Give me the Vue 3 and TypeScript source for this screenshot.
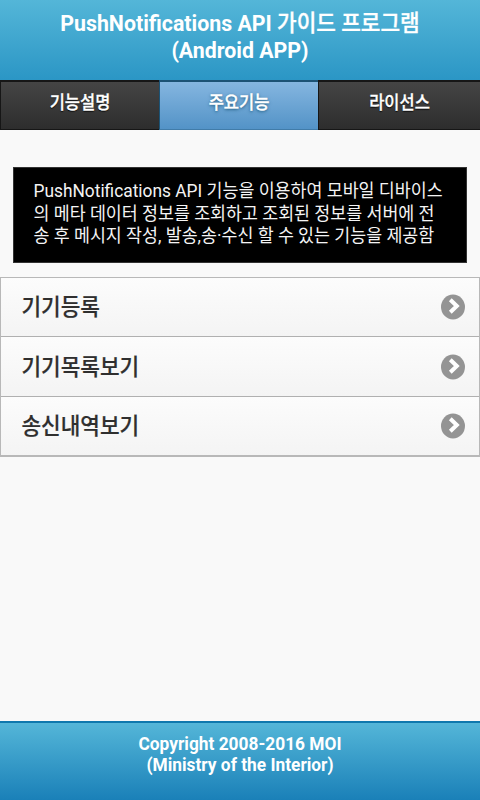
<script setup lang="ts">
interface Tab {
  label: string
  active: boolean
}

const tabs: Tab[] = [
  { label: '기능설명', active: false },
  { label: '주요기능', active: true },
  { label: '라이선스', active: false },
]

const items: string[] = ['기기등록', '기기목록보기', '송신내역보기']
</script>

<template>
  <div class="page">
    <header class="header">
      <h1 class="title">
        <span class="title-line">PushNotifications API <span class="ko">가이드 프로그램</span></span>
        <span class="title-line">(Android APP)</span>
      </h1>
    </header>
    <nav class="tabs">
      <a v-for="tab in tabs" :key="tab.label" class="tab" :class="{ active: tab.active }">
        <span class="tab-text">{{ tab.label }}</span>
      </a>
    </nav>
    <main class="content">
      <p class="notice">
        <span class="line">PushNotifications API 기능을 이용하여 모바일 디바이스</span>
        <span class="line">의 메타 데이터 정보를 조회하고 조회된 정보를 서버에 전</span>
        <span class="line">송 후 메시지 작성, 발송,송·수신 할 수 있는 기능을 제공함</span>
      </p>
      <ul class="list">
        <li v-for="item in items" :key="item" class="row">
          <span class="label">{{ item }}</span>
          <svg class="arrow" viewBox="0 0 24 26" width="24" height="26">
            <ellipse cx="12" cy="13" rx="12" ry="12.5" fill="#949494" />
            <path d="M9.3 5.8 L15.8 12 L9.3 18.2" fill="none" stroke="#fff" stroke-width="4" />
          </svg>
        </li>
      </ul>
    </main>
    <footer class="footer">
      <span class="footer-line">Copyright 2008-2016 MOI</span>
      <span class="footer-line">(Ministry of the Interior)</span>
    </footer>
  </div>
</template>

<style>
body {
  margin: 0;
  background: #f9f9f9;
}
</style>

<style scoped>
.page {
  display: flex;
  flex-direction: column;
  width: 480px;
  height: 800px;
  overflow: hidden;
  background: #f9f9f9;
  font-family: Roboto, "Noto Sans CJK KR", sans-serif;
}

.header {
  box-sizing: border-box;
  flex: none;
  height: 80px;
  padding-top: 10px;
  background: linear-gradient(#54b6d8, #2b96c5);
}

.title {
  margin: 0;
  color: #fff;
  font-size: 21.33px;
  font-weight: 700;
  line-height: 27px;
  text-align: center;
  white-space: nowrap;
}

.title-line {
  display: block;
  transform: scaleY(1.05);
}

.ko {
  font-weight: 500;
  -webkit-text-stroke: 0.3px #fff;
}

.tabs {
  display: grid;
  flex: none;
  grid-template-columns: 159px 159px 162px;
  height: 50px;
}

.tab {
  box-sizing: border-box;
  border: solid #161616;
  border-width: 2px 0 1px 1px;
  background: linear-gradient(#454545, #2d2d2d);
  color: #fff;
  font-size: 16.5px;
  font-weight: 500;
  line-height: 44px;
  text-align: center;
  text-shadow: 0 1px 1px #000;
  -webkit-text-stroke: 0.3px #fff;
}

.tab.active {
  border-color: #1c5375;
  border-bottom-color: #417ca9;
  background: linear-gradient(#85b6e0, #5393c7);
  text-shadow: 0 1px 3px #145072;
}

.tab-text {
  display: block;
  transform: scaleY(1.08);
}

.content {
  flex: 1;
}

.notice {
  display: flex;
  box-sizing: border-box;
  flex-direction: column;
  height: 96px;
  margin: 37px 13px 14px;
  padding: 12px 20px 0 19.5px;
  border: 1px solid #333;
  background: #000;
  color: #f4f4f4;
  font-size: 17.33px;
}

.line {
  height: 22.5px;
  line-height: 22.5px;
  white-space: nowrap;
  transform: scaleY(1.05);
}

.list {
  margin: 0;
  padding: 0;
  border: solid #b8b8b8;
  border-width: 1px 1px 2px;
  list-style: none;
}

.row {
  display: flex;
  box-sizing: border-box;
  align-items: center;
  justify-content: space-between;
  height: 58px;
  padding: 0 14px 0 20.5px;
  background: linear-gradient(#fcfcfc, #f4f4f4);
}

.row + .row {
  height: 60px;
  border-top: 1px solid #b0b0b0;
}

.row + .row:last-child {
  height: 59px;
}

.label {
  padding-bottom: 3px;
  color: #2f2f2f;
  font-size: 21.33px;
  font-weight: 500;
  -webkit-text-stroke: 0.2px #2f2f2f;
  transform: scaleY(1.05);
}

.footer {
  display: flex;
  box-sizing: border-box;
  flex: none;
  flex-direction: column;
  align-items: center;
  height: 79px;
  padding-top: 11px;
  border-top: 2px solid #0f78ad;
  background: linear-gradient(#54b6d8, #1a80b8);
  color: #fff;
  font-size: 17.33px;
  font-weight: 700;
  line-height: 21px;
}

.footer-line {
  transform: scaleY(1.06);
}
</style>
